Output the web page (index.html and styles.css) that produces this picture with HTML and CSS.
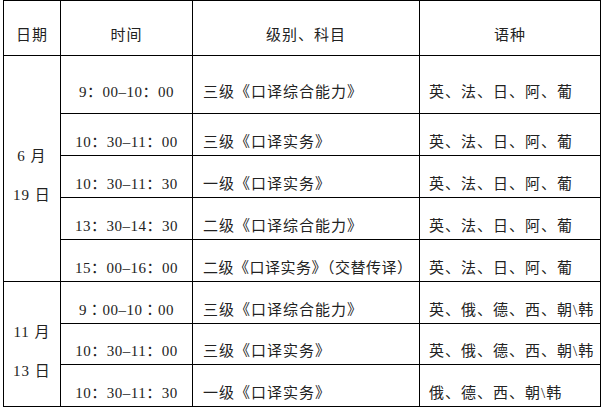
FILE: index.html
```html
<!DOCTYPE html>
<html lang="zh-CN">
<head>
<meta charset="utf-8">
<link rel="stylesheet" href="styles.css">
</head>
<body>
<table class="schedule">
  <colgroup>
    <col class="c-date">
    <col class="c-time">
    <col class="c-subject">
    <col class="c-lang">
  </colgroup>
  <tr class="row-head">
    <th>日期</th>
    <th>时间</th>
    <th>级别、科目</th>
    <th>语种</th>
  </tr>
  <tr class="row-first">
    <td rowspan="5" class="date"><div class="date-lines"><span>6 月</span><span>19 日</span></div></td>
    <td class="time">9：00–10：00</td>
    <td class="subject">三级《口译综合能力》</td>
    <td class="lang">英、法、日、阿、葡</td>
  </tr>
  <tr class="row">
    <td class="time">10：30–11：00</td>
    <td class="subject">三级《口译实务》</td>
    <td class="lang">英、法、日、阿、葡</td>
  </tr>
  <tr class="row">
    <td class="time">10：30–11：30</td>
    <td class="subject">一级《口译实务》</td>
    <td class="lang">英、法、日、阿、葡</td>
  </tr>
  <tr class="row">
    <td class="time">13：30–14：30</td>
    <td class="subject">二级《口译综合能力》</td>
    <td class="lang">英、法、日、阿、葡</td>
  </tr>
  <tr class="row">
    <td class="time">15：00–16：00</td>
    <td class="subject narrow">二级《口译实务》（交替传译）</td>
    <td class="lang">英、法、日、阿、葡</td>
  </tr>
  <tr class="row">
    <td rowspan="3" class="date"><div class="date-lines"><span>11 月</span><span>13 日</span></div></td>
    <td class="time alt">9：00–10：00</td>
    <td class="subject">三级《口译综合能力》</td>
    <td class="lang">英、俄、德、西、朝\韩</td>
  </tr>
  <tr class="row row-short">
    <td class="time">10：30–11：00</td>
    <td class="subject">三级《口译实务》</td>
    <td class="lang">英、俄、德、西、朝\韩</td>
  </tr>
  <tr class="row">
    <td class="time">10：30–11：30</td>
    <td class="subject">一级《口译实务》</td>
    <td class="lang">俄、德、西、朝\韩</td>
  </tr>
</table>
</body>
</html>
```

FILE: styles.css
```css
html, body {
  margin: 0;
  padding: 0;
  background: #fff;
}
body {
  padding-left: 3px;
  font-family: "Liberation Serif", "Noto Sans CJK SC", serif;
  font-size: 15px;
  color: #222;
}
.schedule {
  border-collapse: collapse;
  table-layout: fixed;
  width: 597px;
}
.c-date { width: 57px; }
.c-time { width: 132px; }
.c-subject { width: 227px; }
.c-lang { width: 181px; }
.schedule th,
.schedule td {
  border: 1px solid #000;
  padding: 14px 0 0 0;
  vertical-align: middle;
  white-space: nowrap;
  letter-spacing: 1px;
  line-height: 18px;
}
.schedule th {
  font-weight: normal;
  text-align: center;
}
.row-head { height: 55px; }
.row-first { height: 58px; }
.row { height: 42px; }
.row-short { height: 41px; }
.date {
  text-align: center;
}
.date-lines {
  display: flex;
  flex-direction: column;
  align-items: center;
  gap: 21px;
}
.schedule td.time {
  text-align: center;
  letter-spacing: 0.5px;
}
.time.alt {
  font-family: "Liberation Serif", "Noto Sans CJK TC", serif;
}
.subject {
  padding-left: 10px !important;
  text-align: left;
}
.schedule td.subject.narrow {
  letter-spacing: 0.5px;
}
.lang {
  padding-left: 9px !important;
  text-align: left;
}
```
